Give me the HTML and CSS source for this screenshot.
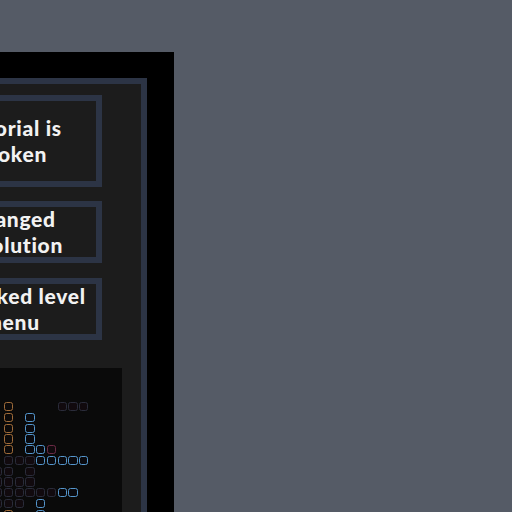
FILE: index.html
```html
<!DOCTYPE html>
<html>
<head>
<meta charset="utf-8">
<link rel="stylesheet" href="styles.css">
</head>
<body>
<div class="modal">
  <div class="panel">
    <div class="buttons">
      <div class="btn btn-tall">Tutorial is<br>broken</div>
      <div class="btn btn-2">Changed<br>resolution</div>
      <div class="btn btn-3">Unlocked level<br>menu</div>
    </div>
    <div class="board">
      <div class="grid">
        <i></i><i class="o"></i><i></i><i></i><i></i><i></i><i class="d"></i><i class="d"></i><i class="d"></i><i></i><i></i><i></i>
        <i></i><i class="o"></i><i></i><i class="b"></i><i></i><i></i><i></i><i></i><i></i><i></i><i></i><i></i>
        <i></i><i class="o"></i><i></i><i class="b"></i><i></i><i></i><i></i><i></i><i></i><i></i><i></i><i></i>
        <i></i><i class="o"></i><i></i><i class="b"></i><i></i><i></i><i></i><i></i><i></i><i></i><i></i><i></i>
        <i></i><i class="o"></i><i></i><i class="b"></i><i class="b"></i><i class="m"></i><i></i><i></i><i></i><i></i><i></i><i></i>
        <i></i><i class="d"></i><i class="d"></i><i class="d"></i><i class="b"></i><i class="b"></i><i class="b"></i><i class="b"></i><i class="b"></i><i></i><i></i><i></i>
        <i class="d"></i><i class="d"></i><i></i><i class="d"></i><i></i><i></i><i></i><i></i><i></i><i></i><i></i><i></i>
        <i class="d"></i><i class="d"></i><i class="d"></i><i class="d"></i><i></i><i></i><i></i><i></i><i></i><i></i><i></i><i></i>
        <i class="d"></i><i class="d"></i><i class="d"></i><i class="d"></i><i class="d"></i><i class="d"></i><i class="b"></i><i class="b"></i><i></i><i></i><i></i><i></i>
        <i class="d"></i><i class="d"></i><i class="d"></i><i></i><i class="b"></i><i></i><i></i><i></i><i></i><i></i><i></i><i></i>
        <i></i><i class="o"></i><i></i><i></i><i class="b"></i><i></i><i></i><i></i><i></i><i></i><i></i><i></i>
      </div>
    </div>
  </div>
</div>
</body>
</html>
```

FILE: styles.css
```css
html, body {
  margin: 0;
  padding: 0;
  background: #555b66;
  overflow: hidden;
  height: 512px;
}
.modal {
  box-sizing: border-box;
  margin: 52px 0 0 -200px;
  width: 374px;
  height: 520px;
  background: #000;
  padding: 26px 27px 0 27px;
}
.panel {
  box-sizing: border-box;
  height: 500px;
  border: 6px solid #2c3445;
  background: #1c1c1c;
  padding-top: 11px;
}
.buttons {
  display: flex;
  flex-direction: column;
  align-items: flex-end;
  padding-right: 39px;
}
.btn {
  box-sizing: border-box;
  width: 180px;
  height: 62px;
  border: 6px solid #2c3445;
  background: #1c1c1c;
  display: flex;
  align-items: center;
  justify-content: center;
  text-align: center;
  color: #f2f2f2;
  font-family: Lato, "Open Sans", sans-serif;
  font-weight: 900;
  font-size: 21px;
  letter-spacing: 0.7px;
  line-height: 26px;
}
.btn-tall { height: 92px; }
.btn-2 { margin-top: 14px; }
.btn-3 { margin-top: 15px; }
.board {
  margin: 28px 19px 0 19px;
  height: 200px;
  background: #0a0a0a;
  padding-top: 34px;
}
.grid {
  margin-left: 141px;
  display: grid;
  grid-template-columns: repeat(12, 9.2px);
  grid-auto-rows: 9.2px;
  gap: 1.6px;
}
.grid i {
  display: block;
  box-sizing: border-box;
  width: 9.2px;
  height: 9.2px;
}
.grid i.d { border: 1px solid #2a2c3a; background: #110a0e; border-radius: 2.5px; }
.grid i.o { border: 1px solid #a06c3a; background: #0c0a0a; border-radius: 2.5px; }
.grid i.b { border: 1px solid #5596cc; background: #0a0a0e; border-radius: 2.5px; }
.grid i.m { border: 1px solid #6b2a45; background: #120a0e; border-radius: 2.5px; }
```
